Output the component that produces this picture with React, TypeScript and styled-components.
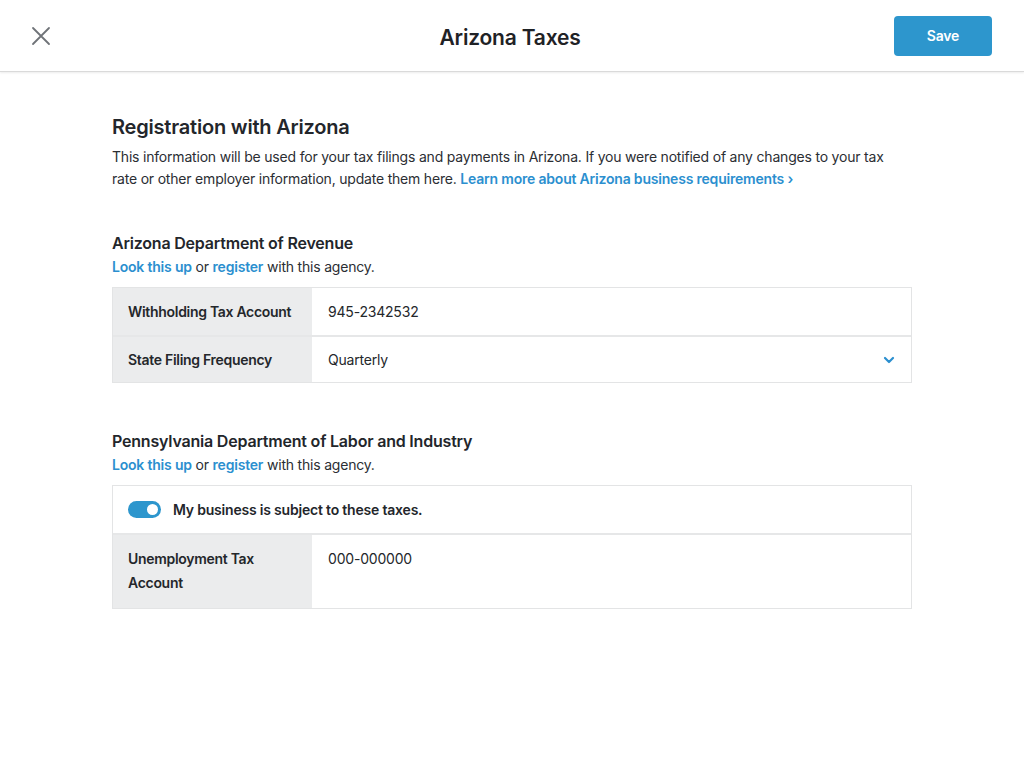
import React from "react";
import styled, { createGlobalStyle } from "styled-components";

const Global = createGlobalStyle`
  html, body { margin: 0; padding: 0; background: #fff; }
  body { font-family: Inter, "Open Sans", sans-serif; color: #23262b; letter-spacing: -0.2px; -webkit-font-smoothing: antialiased; }
  * { box-sizing: border-box; }
`;

const Header = styled.header`
  height: 72px;
  display: grid;
  grid-template-columns: 1fr auto 1fr;
  align-items: center;
  padding: 0 32px 0 28px;
  border-bottom: 1px solid #dadada;
  box-shadow: 0 1px 2px rgba(0,0,0,0.08);
`;

const CloseButton = styled.button`
  justify-self: start;
  background: none;
  border: 0;
  padding: 0;
  width: 26px;
  height: 26px;
  display: flex;
  align-items: center;
  justify-content: center;
  cursor: pointer;
`;

const Title = styled.h1`
  margin: 3px 0 0;
  font-size: 21px;
  font-weight: 600;
  color: #1f2226;
`;

const SaveButton = styled.button`
  justify-self: end;
  width: 98px;
  height: 40px;
  border: 0;
  border-radius: 4px;
  background: #2d96cd;
  color: #fff;
  font-family: inherit;
  font-size: 14px;
  font-weight: 600;
  letter-spacing: -0.2px;
  cursor: pointer;
`;

const Main = styled.main`
  width: 800px;
  margin: 0 auto;
  padding-top: 42px;
`;

const PageHeading = styled.h2`
  margin: 0 0 6px;
  font-size: 20px;
  line-height: 26px;
  font-weight: 600;
`;

const Paragraph = styled.p`
  margin: 0;
  font-size: 14px;
  line-height: 22px;
  color: #2b2e33;
`;

const Link = styled.a`
  color: #2b8fcf;
  font-weight: 600;
  text-decoration: none;
`;

const Section = styled.section<{ $top: number }>`
  margin-top: ${(p) => p.$top}px;
`;

const SectionTitle = styled.h3`
  margin: 0 0 2px;
  font-size: 16px;
  line-height: 22px;
  font-weight: 600;
`;

const Table = styled.div`
  margin-top: 9px;
  border: 1px solid #e3e4e5;
`;

const Row = styled.div<{ $h: number }>`
  display: grid;
  grid-template-columns: 199px 1fr;
  min-height: ${(p) => p.$h}px;
  & + & { border-top: 2px solid #e6e7e8; }
`;

const Label = styled.div<{ $top?: boolean }>`
  background: #ebeced;
  padding: ${(p) => (p.$top ? "12px 15px" : "0 15px")};
  display: flex;
  align-items: ${(p) => (p.$top ? "flex-start" : "center")};
  font-size: 14px;
  line-height: 24px;
  font-weight: 600;
  letter-spacing: -0.3px;
  white-space: nowrap;
  color: #24272b;
`;

const Value = styled.div<{ $top?: boolean }>`
  padding: ${(p) => (p.$top ? "12px 16px" : "0 16px")};
  display: flex;
  align-items: ${(p) => (p.$top ? "flex-start" : "center")};
  justify-content: space-between;
  font-size: 14px;
  line-height: 24px;
  color: #24272b;
`;

const ToggleRow = styled.div`
  height: 47px;
  display: flex;
  align-items: center;
  gap: 12px;
  padding: 0 15px;
  font-size: 14px;
  font-weight: 600;
  & + div { border-top: 2px solid #e6e7e8; }
`;

const Toggle = styled.span`
  position: relative;
  width: 33px;
  height: 17px;
  border-radius: 9px;
  background: #2d96cd;
  &::after {
    content: "";
    position: absolute;
    right: 3px;
    top: 3px;
    width: 11px;
    height: 11px;
    border-radius: 50%;
    background: #fff;
  }
`;

export default function App() {
  return (
    <>
      <Global />
      <Header>
        <CloseButton aria-label="Close">
          <svg width="20" height="20" viewBox="0 0 20 20">
            <path d="M2 2L18 18M18 2L2 18" stroke="#6f7378" strokeWidth="1.8" strokeLinecap="round" />
          </svg>
        </CloseButton>
        <Title>Arizona Taxes</Title>
        <SaveButton>Save</SaveButton>
      </Header>
      <Main>
        <PageHeading>Registration with Arizona</PageHeading>
        <Paragraph>
          This information will be used for your tax filings and payments in Arizona. If you were notified of any changes to your tax rate or other employer information, update them here.{" "}
          <Link href="#">Learn more about Arizona business requirements ›</Link>
        </Paragraph>

        <Section $top={42}>
          <SectionTitle>Arizona Department of Revenue</SectionTitle>
          <Paragraph>
            <Link href="#">Look this up</Link> or <Link href="#">register</Link> with this agency.
          </Paragraph>
          <Table>
            <Row $h={47}>
              <Label>Withholding Tax Account</Label>
              <Value>945-2342532</Value>
            </Row>
            <Row $h={47}>
              <Label>State Filing Frequency</Label>
              <Value>
                Quarterly
                <svg width="12" height="8" viewBox="0 0 12 8">
                  <path d="M2 2L6 6L10 2" stroke="#2b8fcf" strokeWidth="2.2" fill="none" strokeLinecap="round" strokeLinejoin="round" />
                </svg>
              </Value>
            </Row>
          </Table>
        </Section>

        <Section $top={47}>
          <SectionTitle>Pennsylvania Department of Labor and Industry</SectionTitle>
          <Paragraph>
            <Link href="#">Look this up</Link> or <Link href="#">register</Link> with this agency.
          </Paragraph>
          <Table>
            <ToggleRow>
              <Toggle />
              My business is subject to these taxes.
            </ToggleRow>
            <Row $h={75}>
              <Label $top>Unemployment Tax<br />Account</Label>
              <Value $top>000-000000</Value>
            </Row>
          </Table>
        </Section>
      </Main>
    </>
  );
}
